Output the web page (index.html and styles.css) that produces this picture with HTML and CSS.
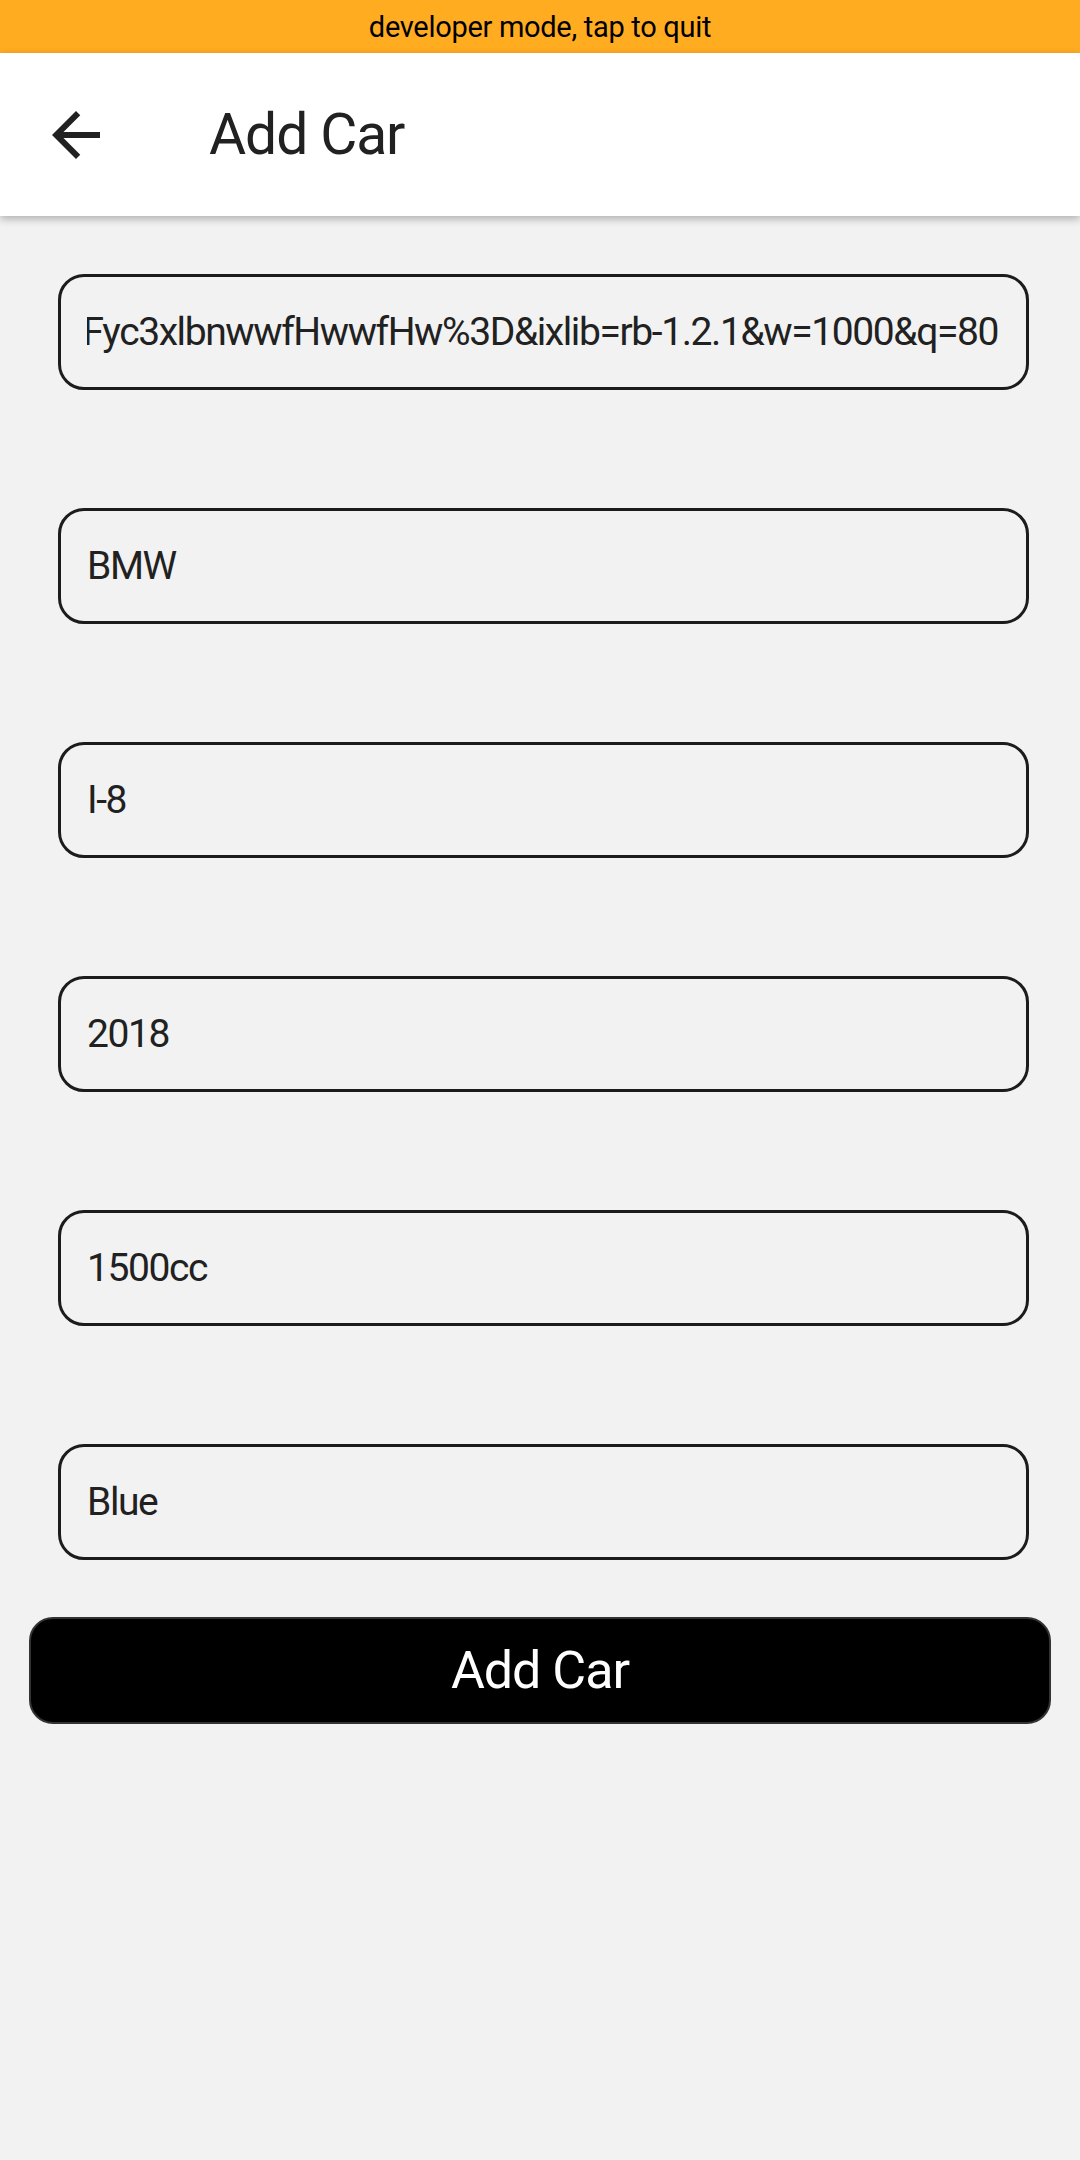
FILE: index.html
```html
<!DOCTYPE html>
<html>
<head>
<meta charset="utf-8">
<link rel="stylesheet" href="styles.css">
</head>
<body>
<div class="devbar">developer mode, tap to quit</div>
<header class="appbar">
  <svg class="back" viewBox="0 0 24 24" width="72" height="72"><path d="M20 11H7.83l5.59-5.59L12 4l-8 8 8 8 1.41-1.41L7.83 13H20v-2z" fill="#212121"/></svg>
  <div class="title">Add Car</div>
</header>
<main class="form">
  <div class="field"><div class="value scroll"><span>https://images.unsplash.com/photo-1555215695-3004980ad54e?ixid=MnwxMjA3fDB8MHxzZWFyY2h8MXx8Ym13JTIwY2Fyc3xlbnwwfHwwfHw%3D&amp;ixlib=rb-1.2.1&amp;w=1000&amp;q=80</span></div></div>
  <div class="field"><div class="value">BMW</div></div>
  <div class="field"><div class="value">I-8</div></div>
  <div class="field"><div class="value">2018</div></div>
  <div class="field"><div class="value">1500cc</div></div>
  <div class="field"><div class="value">Blue</div></div>
  <button class="submit">Add Car</button>
</main>
</body>
</html>
```
FILE: styles.css
```css
html, body {
  margin: 0;
  padding: 0;
}
body {
  width: 1080px;
  height: 2160px;
  background: #f2f2f2;
  font-family: Roboto, "Noto Sans", sans-serif;
  color: #212121;
  overflow: hidden;
}
.devbar {
  height: 53px;
  background: #ffac21;
  color: #000;
  font-size: 29px;
  letter-spacing: -0.3px;
  display: flex;
  align-items: center;
  justify-content: center;
}
.appbar {
  height: 163px;
  background: #fff;
  box-shadow: 0 3px 8px rgba(0, 0, 0, 0.28);
  display: flex;
  align-items: center;
  padding-left: 40px;
  gap: 97px;
  position: relative;
}
.back {
  display: block;
  flex: none;
}
.title {
  font-size: 57px;
  letter-spacing: -1.1px;
  color: #212121;
}
.form {
  display: flex;
  flex-direction: column;
  padding-top: 58px;
}
.field {
  margin: 0 51px 118px 58px;
  height: 116px;
  box-sizing: border-box;
  border: 3px solid #1c1c1c;
  border-radius: 26px;
  display: flex;
  align-items: center;
  padding: 0 28px 0 26px;
}
.field:nth-child(6) {
  margin-bottom: 57px;
}
.value {
  font-size: 39px;
  letter-spacing: -1.4px;
  color: #212121;
  white-space: nowrap;
  flex: 1;
  min-width: 0;
}
.scroll {
  display: flex;
  justify-content: flex-end;
  overflow: hidden;
}
.scroll span {
  flex: none;
}
.submit {
  margin: 0 29px;
  height: 107px;
  background: #000;
  border: 2px solid #333;
  border-radius: 24px;
  color: #fff;
  font-family: Roboto, "Noto Sans", sans-serif;
  font-size: 52px;
  letter-spacing: -1px;
  padding: 0;
}
```
